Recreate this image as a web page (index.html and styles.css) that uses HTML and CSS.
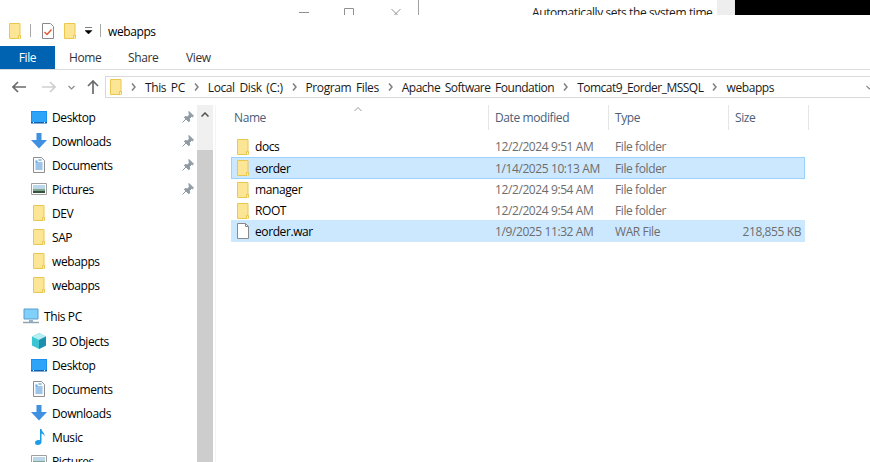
FILE: index.html

```html
<!DOCTYPE html>
<html lang="en">
<head>
    <meta charset="UTF-8">
    <title>webapps</title>
    <link rel="stylesheet" href="styles.css">
</head>
<body>
    <svg class="defs" width="0" height="0">
        <symbol id="folder" viewBox="0 0 16 16">
            <path d="M2.500.5h10.500v15H2.500z" fill="#fde596" stroke="#eac84f"/>
            <path d="M11.500 15.500v-3h2v3" fill="#fdf0b8" stroke="#eac84f"/>
        </symbol>
        <symbol id="desktop" viewBox="0 0 16 14">
            <path d="M0 1h16v12H0z" fill="#1a8fee"/>
            <path d="M1 2h14v10H1z" fill="#2ea4f8"/>
            <path d="M0 12h16v1.500H0z" fill="#0b5fb0"/>
            <path d="M2 12.500h1M13 12.500h1" stroke="#fff"/>
        </symbol>
        <symbol id="downloads" viewBox="0 0 16 16">
            <path d="M5.500 0h5v7H16l-8 8.500L0 7h5.500z" fill="#3f90e0"/>
        </symbol>
        <symbol id="check" viewBox="0 0 12 16">
            <path d="M.5.5h8l3 3v12H.5z" fill="#fff" stroke="#8a8a8a"/>
            <path d="M2.500 9l2.500 2.500 4.500-5" fill="none" stroke="#e2572b" stroke-width="1.400"/>
        </symbol>
        <symbol id="documents" viewBox="0 0 14 16">
            <path d="M1.500.5h8l3 3v12h-11z" fill="#fafafa" stroke="#8f8f8f"/>
            <path d="M6.500 3h3M3.500 6h7M3.500 8h7M3.500 10h7M3.500 12h7" stroke="#3f8fd8"/>
            <path d="M3.500 3.500h2v2h-2z" fill="#5aa4e4"/>
        </symbol>
        <symbol id="pictures" viewBox="0 0 16 14">
            <path d="M.5 1.500h15v11H.5z" fill="#fff" stroke="#a0a0a0"/>
            <path d="M2 3h12v4H2z" fill="#bcd6ea"/>
            <path d="M2 7h12v2H2z" fill="#7fa58c"/>
            <path d="M2 9h12v2H2z" fill="#37503f"/>
        </symbol>
        <symbol id="pin" viewBox="0 0 12 12">
            <path d="M7 .5l4.500 4.500-1 .8-1-.3-2 2 .2 2.500-.8.700L2.300 6.500l.7-.9 2.400.3 2-2-.3-1.100zM4 8L.5 11.500" fill="#8f9ba3" stroke="#8f9ba3"/>
        </symbol>
        <symbol id="chevron" viewBox="0 0 5 8">
            <path d="M1 .5L4 4 1 7.500" fill="none" stroke="#7f7f7f" stroke-width="1.500"/>
        </symbol>
    </svg>

    <div class="strip">
        <div class="ghost-btns">
            <svg class="ghost-min" width="10" height="2"><path d="M0 .5h10" stroke="#909090"/></svg>
            <svg class="ghost-max" width="11" height="15"><path d="M.5 15V8.500h9V15" fill="none" stroke="#909090"/></svg>
            <svg class="ghost-close" width="11" height="15"><path d="M.5 9l9 9M9.500 9l-9 9" stroke="#909090"/></svg>
        </div>
        <div class="ghost-edge"></div>
        <div class="ghost-text">Automatically sets the system time</div>
        <div class="ghost-scroll"></div>
        <div class="ghost-black"></div>
    </div>

    <div class="titlebar">
        <svg class="icon16 ql-first"><use href="#folder"/></svg>
        <span class="ql-sep"></span>
        <svg class="ql-check"><use href="#check"/></svg>
        <svg class="icon16 ql-folder"><use href="#folder"/></svg>
        <svg class="ql-drop" width="8" height="8" viewBox="0 0 8 8"><path d="M0 .5h7M0 3.500h7l-3.500 3.500z" fill="#000" stroke="#000" stroke-width=".5"/></svg>
        <span class="ql-sep ql-sep-b"></span>
        <span class="title">webapps</span>
    </div>

    <div class="tabs">
        <div class="tab tab-file">File</div>
        <div class="tab tab-home">Home</div>
        <div class="tab tab-share">Share</div>
        <div class="tab tab-view">View</div>
    </div>

    <div class="addressrow">
        <svg class="nav nav-back" width="14" height="12" viewBox="0 0 14 12"><path d="M6 1L1 6l5 5M1 6h13" fill="none" stroke="#6b6b6b" stroke-width="1.700"/></svg>
        <svg class="nav nav-fwd" width="14" height="12" viewBox="0 0 14 12"><path d="M8 1l5 5-5 5M13 6H0" fill="none" stroke="#cfcfcf" stroke-width="1.700"/></svg>
        <svg class="nav nav-down" width="7" height="5" viewBox="0 0 7 5"><path d="M.5 1l3 3 3-3" fill="none" stroke="#8a8a8a" stroke-width="1.200"/></svg>
        <svg class="nav nav-up" width="12" height="14" viewBox="0 0 12 14"><path d="M1 6l5-5 5 5M6 1v13" fill="none" stroke="#6b6b6b" stroke-width="1.700"/></svg>
        <div class="address">
            <svg class="icon16 addr-folder"><use href="#folder"/></svg>
            <svg class="crumb-sep"><use href="#chevron"/></svg><span class="crumb">This PC</span>
            <svg class="crumb-sep"><use href="#chevron"/></svg><span class="crumb">Local Disk (C:)</span>
            <svg class="crumb-sep"><use href="#chevron"/></svg><span class="crumb">Program Files</span>
            <svg class="crumb-sep"><use href="#chevron"/></svg><span class="crumb crumb-tight">Apache Software Foundation</span>
            <svg class="crumb-sep"><use href="#chevron"/></svg><span class="crumb crumb-tight">Tomcat9_Eorder_MSSQL</span>
            <svg class="crumb-sep"><use href="#chevron"/></svg><span class="crumb">webapps</span>
            <svg class="addr-drop" width="7" height="5" viewBox="0 0 7 5"><path d="M.5 1l3 3 3-3" fill="none" stroke="#8a8a8a" stroke-width="1.200"/></svg>
        </div>
    </div>

    <div class="main">
        <nav class="sidebar">
            <div class="tree">
                <div class="item"><svg class="icon16"><use href="#desktop"/></svg><span class="label">Desktop</span><svg class="pin"><use href="#pin"/></svg></div>
                <div class="item"><svg class="icon16"><use href="#downloads"/></svg><span class="label">Downloads</span><svg class="pin"><use href="#pin"/></svg></div>
                <div class="item"><svg class="icon16"><use href="#documents"/></svg><span class="label">Documents</span><svg class="pin"><use href="#pin"/></svg></div>
                <div class="item"><svg class="icon16"><use href="#pictures"/></svg><span class="label">Pictures</span><svg class="pin"><use href="#pin"/></svg></div>
                <div class="item"><svg class="icon16"><use href="#folder"/></svg><span class="label">DEV</span></div>
                <div class="item"><svg class="icon16"><use href="#folder"/></svg><span class="label">SAP</span></div>
                <div class="item"><svg class="icon16"><use href="#folder"/></svg><span class="label">webapps</span></div>
                <div class="item"><svg class="icon16"><use href="#folder"/></svg><span class="label">webapps</span></div>

                <div class="item item-root">
                    <svg class="icon16" viewBox="0 0 16 16">
                        <path d="M1 1h14v10H1z" fill="#7fd0fa" stroke="#5a9cc8"/>
                        <path d="M6 12h4v2H6z" fill="#9ab4c4"/>
                        <path d="M0 14.500h16" stroke="#8fa4b2" stroke-width="1.500"/>
                    </svg>
                    <span class="label">This PC</span>
                </div>
                <div class="item">
                    <svg class="icon16" viewBox="0 0 16 16">
                        <path d="M8 0l7 3.500v9L8 16l-7-3.500v-9z" fill="#3bc4d2"/>
                        <path d="M8 0l7 3.500L8 7 1 3.500z" fill="#b5eef2"/>
                        <path d="M8 7l7-3.500v9L8 16z" fill="#1f8fb0"/>
                    </svg>
                    <span class="label">3D Objects</span>
                </div>
                <div class="item"><svg class="icon16"><use href="#desktop"/></svg><span class="label">Desktop</span></div>
                <div class="item"><svg class="icon16"><use href="#documents"/></svg><span class="label">Documents</span></div>
                <div class="item"><svg class="icon16"><use href="#downloads"/></svg><span class="label">Downloads</span></div>
                <div class="item">
                    <svg class="icon16" viewBox="0 0 16 16">
                        <path d="M9 0h1.500c.3 3 3.500 3.500 3 7.500-.5-2-2-2.800-3-3V13c0 1.800-1.800 3-3.700 3C5 16 4 15 4 13.700 4 12 5.700 11 7.500 11c.6 0 1.100.1 1.500.3z" fill="#1e9be8"/>
                    </svg>
                    <span class="label">Music</span>
                </div>
                <div class="item"><svg class="icon16"><use href="#pictures"/></svg><span class="label">Pictures</span></div>
            </div>
            <div class="scrollbar">
                <div class="scroll-up">
                    <svg width="8" height="5" viewBox="0 0 8 5"><path d="M.5 4.500L4 1l3.500 3.500" fill="none" stroke="#505050" stroke-width="1.500"/></svg>
                </div>
                <div class="scroll-thumb"></div>
            </div>
        </nav>

        <section class="files">
            <div class="sort-arrow">
                <svg width="8" height="4" viewBox="0 0 8 4"><path d="M.5 4L4 .5 7.500 4" fill="none" stroke="#9a9a9a"/></svg>
            </div>
            <div class="head">
                <div class="col col-name">Name</div>
                <div class="col col-date">Date modified</div>
                <div class="col col-type">Type</div>
                <div class="col col-size">Size</div>
            </div>
            <div class="rows">
                <div class="row">
                    <div class="cell-name"><svg class="icon16"><use href="#folder"/></svg>docs</div>
                    <div class="cell">12/2/2024 9:51 AM</div>
                    <div class="cell">File folder</div>
                    <div class="cell cell-size"></div>
                </div>
                <div class="row row-hover">
                    <div class="cell-name"><svg class="icon16"><use href="#folder"/></svg>eorder</div>
                    <div class="cell">1/14/2025 10:13 AM</div>
                    <div class="cell">File folder</div>
                    <div class="cell cell-size"></div>
                </div>
                <div class="row">
                    <div class="cell-name"><svg class="icon16"><use href="#folder"/></svg>manager</div>
                    <div class="cell">12/2/2024 9:54 AM</div>
                    <div class="cell">File folder</div>
                    <div class="cell cell-size"></div>
                </div>
                <div class="row">
                    <div class="cell-name"><svg class="icon16"><use href="#folder"/></svg>ROOT</div>
                    <div class="cell">12/2/2024 9:54 AM</div>
                    <div class="cell">File folder</div>
                    <div class="cell cell-size"></div>
                </div>
                <div class="row row-selected">
                    <div class="cell-name">
                        <svg class="icon16" viewBox="0 0 14 16"><path d="M1.500.5h8l3 3v12h-11z" fill="#fff" stroke="#8a8a8a"/><path d="M9.500.5v3h3" fill="none" stroke="#8a8a8a"/></svg>
                        eorder.war
                    </div>
                    <div class="cell">1/9/2025 11:32 AM</div>
                    <div class="cell">WAR File</div>
                    <div class="cell cell-size">218,855 KB</div>
                </div>
            </div>
        </section>
    </div>
</body>
</html>
```

FILE: styles.css

```css
* {
    margin: 0;
    padding: 0;
    box-sizing: border-box;
}
html, body {
    height: 100%;
    overflow: hidden;
}
body {
    background: #fff;
    color: #000;
    font-family: 'Open Sans', sans-serif;
    font-size: 12px;
    letter-spacing: -0.4px;
}
.defs {
    position: absolute;
}
.icon16 {
    width: 16px;
    height: 16px;
    flex: none;
}

/* bit of other windows left at the top */
.strip {
    height: 15px;
    display: flex;
    overflow: hidden;
}
.ghost-btns {
    display: flex;
    align-items: flex-start;
    margin-left: 299px;
    width: 119px;
}
.ghost-min {
    margin-top: 12px;
}
.ghost-max {
    margin-left: 35px;
}
.ghost-close {
    margin-left: 36px;
}
.ghost-edge {
    width: 1px;
    background: #a0a0a0;
}
.ghost-text {
    margin-left: 113px;
    width: 185px;
    padding-top: 4px;
    color: #1a1a1a;
    white-space: nowrap;
    line-height: 18px;
    overflow: hidden;
}
.ghost-scroll {
    width: 17px;
    background: #eeeeee;
}
.ghost-black {
    flex: 1;
    background: #000;
    border-left: 1px solid #e8e8e8;
}

.titlebar {
    height: 31px;
    display: flex;
    align-items: center;
}
.ql-first {
    margin-left: 7px;
}
.ql-sep {
    width: 1px;
    height: 13px;
    background: #a8a8a8;
    margin-left: 7px;
}
.ql-check {
    width: 12px;
    height: 16px;
    flex: none;
    margin-left: 11px;
}
.ql-folder {
    margin-left: 8px;
}
.ql-drop {
    margin-left: 7px;
}
.ql-sep-b {
    margin-left: 7px;
}
.title {
    margin-left: 7px;
    padding-top: 1px;
}

.tabs {
    height: 24px;
    display: flex;
    border-bottom: 1px solid #dadbdc;
}
.tab {
    line-height: 23px;
    color: #333;
}
.tab-file {
    width: 55px;
    height: 23px;
    background: #0063b1;
    color: #fff;
    text-align: center;
}
.tab-home {
    margin-left: 14px;
    width: 59px;
}
.tab-share {
    width: 58px;
}

.addressrow {
    height: 35px;
    padding-bottom: 1px;
    display: flex;
    align-items: center;
}
.nav {
    flex: none;
}
.nav-back {
    margin-left: 12px;
}
.nav-fwd {
    margin-left: 16px;
}
.nav-down {
    margin-left: 12px;
}
.nav-up {
    margin-left: 12px;
}
.address {
    flex: 1;
    height: 22px;
    margin: 0 -10px 0 6px;
    border: 1px solid #d9d9d9;
    display: flex;
    align-items: center;
    padding-left: 2px;
    white-space: nowrap;
    word-spacing: 2px;
}
.addr-folder {
    margin-right: -2px;
}
.addr-drop {
    flex: none;
    margin: 0 6px 0 auto;
}
.crumb-sep {
    width: 5px;
    height: 8px;
    flex: none;
    margin: 0 9px;
}
.crumb {
    color: #1a1a1a;
}
.crumb-tight {
    letter-spacing: -0.5px;
}

.main {
    height: 357px;
    display: flex;
}
.sidebar {
    width: 216px;
    flex: none;
    display: flex;
    border-right: 1px solid #f5f5f5;
    overflow: hidden;
}
.tree {
    width: 197px;
    flex: none;
}
.item {
    height: 24px;
    display: flex;
    align-items: center;
    padding-left: 31px;
    position: relative;
}
.item .label {
    margin-left: 5px;
}
.item-root {
    margin-top: 7px;
    margin-bottom: 1px;
    padding-left: 23px;
}
.pin {
    position: absolute;
    left: 182px;
    top: 6px;
    width: 12px;
    height: 12px;
}
.scrollbar {
    width: 16px;
    flex: none;
    display: flex;
    flex-direction: column;
}
.scroll-up {
    height: 45px;
    background: #f0f0f0;
    display: flex;
    justify-content: center;
    padding-top: 7px;
}
.scroll-thumb {
    flex: 1;
    background: #cdcdcd;
}

.files {
    flex: 1;
    position: relative;
    padding-left: 15px;
}
.sort-arrow {
    position: absolute;
    left: 138px;
    top: 0;
    line-height: 0;
    padding-top: 2px;
}
.head {
    display: flex;
    height: 25px;
}
.col {
    color: #4c607a;
    line-height: 25px;
    border-right: 1px solid #e5e5e5;
}
.col-name {
    width: 258px;
    padding-left: 3px;
}
.col-date {
    width: 120px;
    padding-left: 6px;
}
.col-type {
    width: 120px;
    padding-left: 6px;
}
.col-size {
    width: 80px;
    padding-left: 6px;
}
.rows {
    padding-top: 6px;
    width: 574px;
}
.row {
    height: 21px;
    display: flex;
    align-items: center;
    border: 1px solid transparent;
}
.row-hover {
    height: 22px;
    background: #cce8ff;
    border-color: #99d1ff;
}
.row-selected {
    height: 22px;
    margin-top: -1px;
    background: #cce8ff;
    border-color: #cce8ff;
}
.cell-name {
    width: 263px;
    padding-left: 3px;
    display: flex;
    align-items: center;
    gap: 4px;
}
.cell {
    width: 120px;
    color: #6d6d6d;
}
.cell-size {
    width: 66px;
    text-align: right;
    white-space: nowrap;
}
```
